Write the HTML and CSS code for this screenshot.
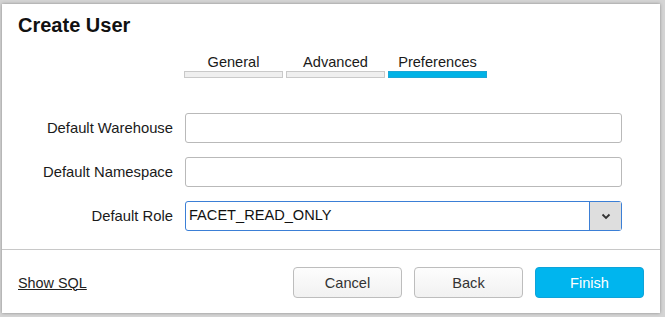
FILE: index.html
```html
<!DOCTYPE html>
<html lang="en">
<head>
    <meta charset="UTF-8">
    <title>Create User</title>
    <link rel="stylesheet" href="styles.css">
</head>
<body>

<div class="dialog">
    <h2 class="title">Create User</h2>

    <ul class="steps">
        <li class="step">General</li>
        <li class="step">Advanced</li>
        <li class="step active">Preferences</li>
    </ul>

    <form class="form">
        <label class="label" for="warehouse">Default Warehouse</label>
        <input class="field" type="text" id="warehouse">

        <label class="label" for="namespace">Default Namespace</label>
        <input class="field" type="text" id="namespace">

        <label class="label" for="role">Default Role</label>
        <div class="select" id="role">
            <span class="select-value">FACET_READ_ONLY</span>
            <span class="select-btn">
                <svg width="10" height="7" viewBox="0 0 10 7"><path d="M1.5 1.5 L5 5 L8.5 1.5" fill="none" stroke="#333" stroke-width="1.8"/></svg>
            </span>
        </div>
    </form>

    <div class="footer">
        <a href="#" class="show-sql">Show SQL</a>
        <div class="buttons">
            <button type="button" class="btn">Cancel</button>
            <button type="button" class="btn">Back</button>
            <button type="button" class="btn primary">Finish</button>
        </div>
    </div>
</div>

</body>
</html>
```

FILE: styles.css
```css
body {
    margin: 0;
    background: #d4d4d4;
    font-family: "Liberation Sans", Arial, sans-serif;
    color: #222;
}
.dialog {
    margin: 4px 5px 4px 2px;
    height: 309px;
    background: white;
    box-shadow: 0 0 3px rgba(0, 0, 0, 0.35);
    display: flex;
    flex-direction: column;
}
.title {
    margin: 9px 0 0 16px;
    font-size: 20px;
    line-height: 24px;
    font-weight: bold;
    color: #111;
}
.steps {
    list-style: none;
    margin: 16px 0 0 182px;
    padding: 0;
    display: flex;
    gap: 3px;
}
.step {
    width: 99px;
    text-align: center;
    font-size: 14.6px;
    line-height: 18px;
    color: #1a1a1a;
}
.step::after {
    content: "";
    display: block;
    height: 5px;
    background: #efefef;
    border: 1px solid #c9c9c9;
}
.step.active::after {
    background: #00b2e6;
    border-color: #1aa6d6;
}
.form {
    margin: 35px 0 0 0;
    display: grid;
    grid-template-columns: 171px 437px;
    column-gap: 12px;
    row-gap: 14px;
    align-items: center;
}
.label {
    text-align: right;
    font-size: 14.8px;
    color: #1a1a1a;
}
.field {
    height: 30px;
    box-sizing: border-box;
    border: 1px solid #b9b9b9;
    border-radius: 3px;
    margin: 0;
}
.select {
    height: 30px;
    box-sizing: border-box;
    border: 1.5px solid #3b7fd6;
    border-radius: 3px;
    display: flex;
    align-items: stretch;
}
.select-value {
    flex: 1;
    padding-left: 3px;
    font-size: 14.6px;
    line-height: 27px;
    color: #111;
}
.select-btn {
    width: 31px;
    border-left: 1.5px solid #3b7fd6;
    background: #dedede;
    display: flex;
    align-items: center;
    justify-content: center;
}
.footer {
    margin-top: 18px;
    border-top: 1px solid #c8c8c8;
    padding: 17px 16px 0 16px;
    display: flex;
    justify-content: space-between;
    align-items: center;
}
.show-sql {
    font-size: 14.4px;
    color: #222;
    text-decoration: underline;
}
.buttons {
    display: flex;
    gap: 12px;
}
.btn {
    width: 109px;
    height: 31px;
    font-family: "Liberation Sans", Arial, sans-serif;
    font-size: 14.6px;
    color: #333;
    background: linear-gradient(#fdfdfd, #f1f1f1);
    border: 1px solid #bdbdbd;
    border-radius: 4px;
}
.btn.primary {
    color: white;
    background: #00b5ee;
    border-color: #0ea3d9;
}
```
